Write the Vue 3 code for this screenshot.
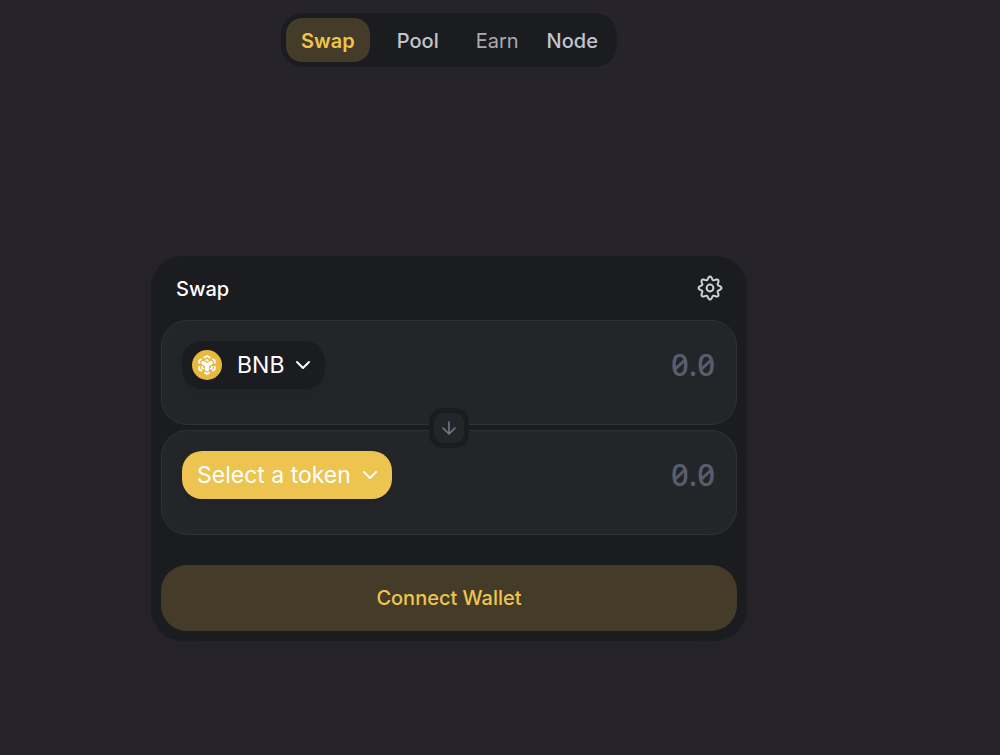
<script setup>
import { ref } from 'vue'

const links = [
  { name: 'Swap', kind: 'active' },
  { name: 'Pool', kind: 'wide' },
  { name: 'Earn', kind: 'light' },
  { name: 'Node', kind: 'last' },
]
const fromAmount = ref('')
const toAmount = ref('')

// Eight-lobed gear outline around the centre of a 26-unit box
const gearPoints = Array.from({ length: 96 }, (_, i) => {
  const angle = (i / 96) * Math.PI * 2
  const radius = 9.9 + 1.6 * Math.cos(8 * angle)
  return `${(13 + radius * Math.cos(angle)).toFixed(2)},${(13 + radius * Math.sin(angle)).toFixed(2)}`
}).join(' ')
</script>

<template>
  <div class="page">
    <nav class="nav">
      <a v-for="link in links" :key="link.name" href="#" class="link" :class="link.kind">{{ link.name }}</a>
    </nav>
    <main class="card">
      <header class="head">
        <h1>Swap</h1>
        <button class="gear" type="button" aria-label="Settings">
          <svg viewBox="0 0 26 26" width="26" height="26" fill="none" stroke="currentColor" stroke-width="2" stroke-linejoin="round">
            <polygon :points="gearPoints" />
            <circle cx="13" cy="13" r="3.4" />
          </svg>
        </button>
      </header>
      <div class="panels">
        <section class="panel">
          <button class="token" type="button">
            <svg class="coin" viewBox="0 0 30 30" width="30" height="30">
              <circle cx="15" cy="15" r="15" fill="#e8b83f" />
              <g fill="none" stroke="#fff" stroke-width="1.9">
                <path d="M11.6 7.9L15 6L18.4 7.9M20.2 9L22.8 10.5V13.6M22.8 16.3V19.4L20.2 20.9M17.6 22.4L15 23.9L12.4 22.4M9.8 20.9L7.2 19.4V16.3M7.2 13.6V10.5L9.8 9" />
                <path d="M10.2 16V18.2L11.8 19.1M19.8 16V18.2L18.2 19.1" stroke-width="1.7" />
              </g>
              <path d="M12.8 10.3L15 9L17.2 10.3L15 11.6Z" fill="#fff" />
              <path d="M9.3 11.8L11.2 10.8L15 13L18.8 10.8L20.7 11.8V13.9L17.1 16.1V20.3L15 21.5L12.9 20.3V16.1L9.3 13.9Z" fill="#fff" />
            </svg>
            <span>BNB</span>
            <svg class="chevron" viewBox="0 0 16 10" width="16" height="10"><path d="M2 2L8 8L14 2" /></svg>
          </button>
          <input v-model="fromAmount" class="amount" type="text" placeholder="0.0" aria-label="From amount" />
        </section>
        <button class="flip" type="button" aria-label="Switch tokens">
          <svg viewBox="0 0 16 16" width="16" height="16" fill="none" stroke="currentColor" stroke-width="1.6" stroke-linecap="round" stroke-linejoin="round"><path d="M8 2V14M2 8L8 14L14 8" /></svg>
        </button>
        <section class="panel">
          <button class="token select" type="button">
            <span>Select a token</span>
            <svg class="chevron" viewBox="0 0 16 10" width="16" height="10"><path d="M2 2L8 8L14 2" /></svg>
          </button>
          <input v-model="toAmount" class="amount" type="text" placeholder="0.0" aria-label="To amount" />
        </section>
      </div>
      <button class="connect" type="button">Connect Wallet</button>
    </main>
  </div>
</template>

<style>
body {
  background: #26242a;
}
</style>

<style scoped>
* {
  box-sizing: border-box;
}
.page {
  display: flex;
  flex-direction: column;
  align-items: center;
  min-height: 100vh;
  padding: 13px 102px 24px 0;
  font-family: Inter, sans-serif;
  color: #fff;
}
button {
  border: 0;
  padding: 0;
  font: inherit;
  color: inherit;
  background: none;
  cursor: pointer;
}
.nav {
  display: flex;
  padding: 5px;
  border-radius: 22px;
  background: #1b1c20;
}
.link {
  padding: 2px 14px 0;
  border-radius: 16px;
  font-size: 20px;
  line-height: 42px;
  font-weight: 500;
  color: #c3c5cb;
  text-decoration: none;
}
.active {
  padding: 2px 15px 0;
  font-weight: 600;
  color: #f0c44c;
  background: #443b29;
}
.wide {
  padding: 2px 23px 0 27px;
}
.light {
  font-weight: 400;
  color: #a9abb1;
}
.card {
  width: 100%;
  max-width: 596px;
  margin-top: 189px;
  padding: 10px;
  border-radius: 32px;
  background: #1b1c20;
  box-shadow: 0 16px 32px rgba(0, 0, 0, 0.04);
}
.head {
  display: flex;
  align-items: center;
  justify-content: space-between;
  height: 54px;
  padding: 0 14px 10px 15px;
}
h1 {
  margin: 0;
  font-size: 20px;
  line-height: 26px;
  padding-top: 1px;
  font-weight: 500;
}
.gear {
  display: flex;
  color: #d0d1d3;
}
.panels {
  position: relative;
  display: grid;
  grid-template-columns: minmax(0, 1fr);
  gap: 5px;
}
.panel {
  display: flex;
  align-items: flex-start;
  justify-content: space-between;
  height: 105px;
  padding: 20px;
  border: 1px solid #303136;
  border-radius: 26px;
  background: #242529;
}
.token {
  display: flex;
  align-items: center;
  flex-shrink: 0;
  height: 48px;
  padding: 0 14px 0 10px;
  border-radius: 20px;
  font-size: 23px;
  font-weight: 400;
  background: #1b1c20;
  box-shadow: 0 8px 12px rgba(0, 0, 0, 0.05);
}
.coin {
  margin-right: 15px;
}
.chevron {
  margin-left: 11px;
  fill: none;
  stroke: currentColor;
  stroke-width: 2;
  stroke-linecap: round;
  stroke-linejoin: round;
}
.select {
  padding-left: 15px;
  background: #edc44f;
}
.amount {
  flex: 1;
  min-width: 0;
  height: 48px;
  padding: 0 1px 2px 0;
  border: 0;
  outline: 0;
  background: none;
  color: #fff;
  font-family: "Noto Sans", sans-serif;
  font-size: 31px;
  font-weight: 500;
  font-feature-settings: "zero";
  text-align: right;
}
.amount::placeholder {
  color: #5b5d6e;
  opacity: 1;
}
.flip {
  position: absolute;
  top: 50%;
  left: 50%;
  display: flex;
  align-items: center;
  justify-content: center;
  width: 40px;
  height: 40px;
  border: 5px solid #1b1c20;
  border-radius: 14px;
  color: #74778a;
  background: #242529;
  transform: translate(-50%, -50%);
}
.connect {
  display: block;
  width: 100%;
  height: 66px;
  margin-top: 30px;
  border-radius: 26px;
  font-size: 20px;
  font-weight: 500;
  color: #f0c44c;
  background: #443b29;
}
</style>
